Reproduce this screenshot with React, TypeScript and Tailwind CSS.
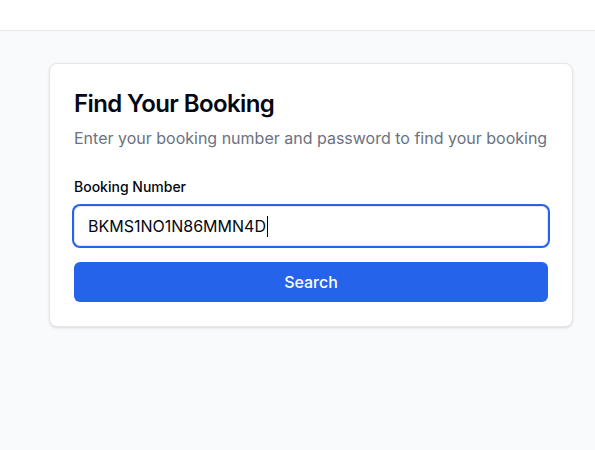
import React from "react";

export default function App() {
  return (
    <div className="min-h-[450px] bg-[#f9fafb]" style={{ fontFamily: "Inter, 'Noto Sans', sans-serif" }}>
      <div className="h-[31px] bg-white border-b border-[#e5e7eb]" />
      <div className="pt-8 pl-[49px]">
        <div className="w-[524px] rounded-lg border border-[#e5e7eb] bg-white shadow-sm p-6">
          <h1 className="text-2xl font-semibold text-[#030712] leading-8 tracking-tight">Find Your Booking</h1>
          <p className="mt-[6px] text-base leading-6 text-[#6b7280]">
            Enter your booking number and password to find your booking
          </p>
          <div className="mt-[27px]">
            <label className="block text-sm font-medium leading-5 text-[#030712]">Booking Number</label>
            <div className="mt-[9px] flex h-10 items-center rounded-md border border-[#e5e7eb] bg-white px-[13px] ring-2 ring-[#2563eb]">
              <span className="text-base text-[#030712]">BKMS1NO1N86MMN4D</span>
              <span className="ml-px h-[21px] w-px bg-black" />
            </div>
            <button className="mt-4 flex h-10 w-full items-center justify-center rounded-md bg-[#2563eb] text-base font-medium text-white">
              Search
            </button>
          </div>
        </div>
      </div>
    </div>
  );
}
